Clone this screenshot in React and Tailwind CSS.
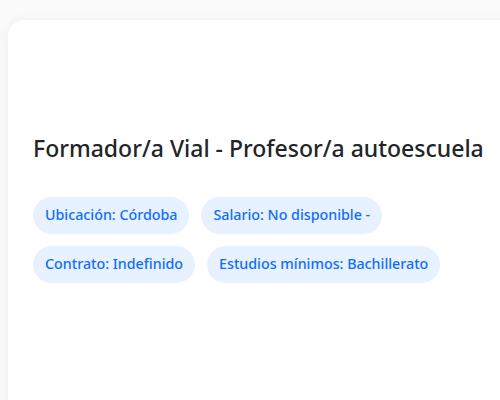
import React from "react";

const tags = [
  ["Ubicación: Córdoba", "Salario: No disponible -"],
  ["Contrato: Indefinido", "Estudios mínimos: Bachillerato"],
];

const Tag = ({ children }) => (
  <span className="inline-flex h-[37px] items-center rounded-full bg-[#e7f1ff] px-3 text-[14.25px] font-medium text-[#0d6efd]">
    {children}
  </span>
);

export default function App() {
  return (
    <div
      className="h-[400px] w-[500px] overflow-hidden bg-[#fafafa] pl-2 pt-5"
      style={{ fontFamily: '"Noto Sans", "Open Sans", sans-serif' }}
    >
      <div className="h-[420px] w-[520px] rounded-tl-2xl bg-white pl-[25px] pt-[115px] shadow-[0_0_12px_rgba(0,0,0,0.05)]">
        <h1 className="text-[23px] font-medium leading-[1.2] text-[#212529]">
          Formador/a Vial - Profesor/a autoescuela
        </h1>
        <div className="mt-[34px] flex flex-col gap-3">
          {tags.map((row, i) => (
            <div key={i} className="flex gap-3">
              {row.map((t) => (
                <Tag key={t}>{t}</Tag>
              ))}
            </div>
          ))}
        </div>
      </div>
    </div>
  );
}
